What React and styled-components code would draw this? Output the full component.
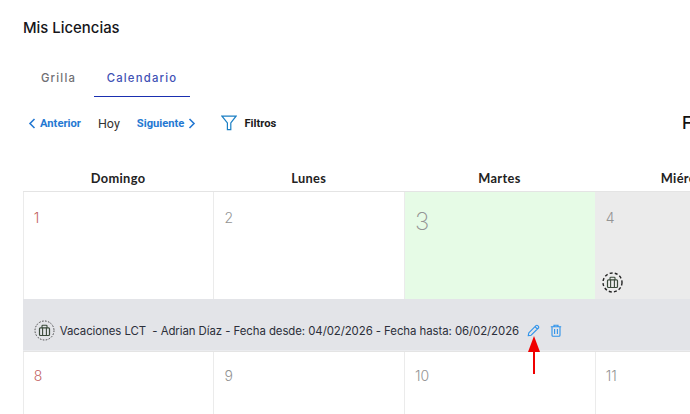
import React from "react";
import styled, { createGlobalStyle } from "styled-components";

const Global = createGlobalStyle`
  html, body { margin: 0; padding: 0; background: #fff; }
  body { font-family: "Inter", "Liberation Sans", sans-serif; }
`;

const Page = styled.div`
  position: relative;
  width: 690px;
  height: 414px;
  overflow: hidden;
  padding-left: 23px;
  box-sizing: border-box;
`;

const Title = styled.h1`
  margin: 0;
  padding-top: 19px;
  font-size: 14.9px;
  line-height: 18px;
  font-weight: 500;
  color: #16161a;
`;

const Tabs = styled.div`
  display: flex;
  margin-top: 24px;
  height: 35px;
`;

const Tab = styled.div`
  box-sizing: border-box;
  width: ${(p) => p.$w}px;
  height: 36px;
  padding-top: 10px;
  text-align: center;
  font-size: 11.3px;
  line-height: 14px;
  font-weight: 500;
  letter-spacing: 1.2px;
  color: ${(p) => (p.$active ? "#3f51b5" : "#6f6f73")};
  border-bottom: ${(p) => (p.$active ? "1px solid #1a2fb0" : "none")};
`;

const Toolbar = styled.div`
  display: flex;
  align-items: center;
  height: 22px;
  margin-top: 16px;
  width: 667px;
  font-family: "Roboto", sans-serif;
  font-size: 11.2px;
  font-weight: 700;
`;

const NavLink = styled.span`
  display: flex;
  align-items: center;
  gap: 4px;
  color: #2478d2;
  margin-left: ${(p) => p.$ml || 0}px;
`;

const Today = styled.span`
  margin-left: 17px;
  font-weight: 400;
  font-size: 12.5px;
  color: #333;
`;

const FilterBtn = styled.span`
  display: flex;
  align-items: center;
  gap: 7px;
  margin-left: 25px;
  color: #1b1b1b;
`;

const Month = styled.span`
  margin-left: auto;
  width: 8px;
  font-family: "Inter", sans-serif;
  font-size: 17px;
  font-weight: 500;
  color: #111;
  white-space: nowrap;
`;

const Calendar = styled.div`
  margin-top: 37px;
  margin-left: -0.3px;
  width: 1335px;
`;

const DayHead = styled.div`
  display: grid;
  grid-template-columns: repeat(7, 190.7px);
  height: 20px;
`;

const DayName = styled.div`
  text-align: center;
  font-family: "Lato", sans-serif;
  font-size: 12.8px;
  line-height: 15px;
  font-weight: 700;
  letter-spacing: 0.35px;
  color: #222;
`;

const Week = styled.div`
  display: grid;
  grid-template-columns: repeat(7, 190.7px);
  height: ${(p) => p.$h}px;
  border-top: 1.5px solid #e4e4e4;
  box-sizing: border-box;
`;

const Cell = styled.div`
  position: relative;
  box-sizing: border-box;
  border-left: 1.5px solid #ebebeb;
  background: ${(p) => p.$bg || "#fff"};
  padding: ${(p) => p.$pt}px 0 0 10px;
  font-weight: ${(p) => (p.$today ? 200 : 300)};
  font-size: ${(p) => (p.$today ? 24 : 14)}px;
  line-height: ${(p) => (p.$today ? 28 : 20)}px;
  color: ${(p) => p.$color || "#949494"};
`;

const CellBadge = styled.span`
  position: absolute;
  left: 6px;
  bottom: 6px;
  display: flex;
`;

const Detail = styled.div`
  display: flex;
  align-items: center;
  height: 52px;
  width: 668px;
  box-sizing: border-box;
  padding: 12px 0 0 11px;
  background: #e3e4e8;
  border-bottom: 1px solid #ebecef;
  font-size: 11.4px;
  white-space: pre;
`;

const DetailText = styled.span`
  margin-left: 5px;
  letter-spacing: -0.06px;
  color: #2c2f3a;
`;

const DetailActions = styled.span`
  display: flex;
  align-items: center;
  gap: 10px;
  margin-left: 8px;
`;

const Arrow = styled.svg`
  position: absolute;
  left: 528px;
  top: 335px;
`;

const Briefcase = ({ size = 21, sw = 1.4, dash = "3 2.2", color = "#222" }) => (
  <svg width={size} height={size} viewBox="0 0 21 21" fill="none">
    <circle cx="10.5" cy="10.5" r="9.5" stroke={color} strokeWidth={sw} strokeDasharray={dash} />
    <rect x="5.5" y="7.8" width="10" height="7.7" rx="1" stroke="#3a4a3a" strokeWidth="1.2" />
    <path d="M8 7.8V6a.8.8 0 0 1 .8-.8h3.4a.8.8 0 0 1 .8.8v1.8M8.6 7.8v7.7M12.4 7.8v7.7" stroke="#3a4a3a" strokeWidth="1.1" />
  </svg>
);

const Chevron = ({ dir }) => (
  <svg width="8" height="11" viewBox="0 0 8 11" fill="none">
    <path d={dir === "l" ? "M6.5 1L2 5.5l4.5 4.5" : "M1.5 1L6 5.5 1.5 10"} stroke="#2478d2" strokeWidth="1.6" />
  </svg>
);

const Funnel = () => (
  <svg width="16" height="16" viewBox="0 0 16 16" fill="none">
    <path d="M1 1.2h14L9.8 8v6.6H6.4V8L1 1.2z" stroke="#1b7fc4" strokeWidth="1.2" />
  </svg>
);

const Pencil = () => (
  <svg width="13" height="13" viewBox="0 0 13 13" fill="none">
    <path d="M1.2 11.8l.6-3L9 1.6a1.2 1.2 0 0 1 1.7 0l.7.7a1.2 1.2 0 0 1 0 1.7L4.2 11.2l-3 .6zM8 2.7l2.3 2.3" stroke="#2f93ea" strokeWidth="1.1" strokeLinejoin="round" />
  </svg>
);

const Trash = () => (
  <svg width="12" height="13" viewBox="0 0 12 13" fill="none">
    <path d="M.8 2.8h10.4M4 2.6V1.2h4v1.4M2 2.8v8.4a1 1 0 0 0 1 1h6a1 1 0 0 0 1-1V2.8M4.6 5v5M7.4 5v5" stroke="#2f93ea" strokeWidth="1.1" />
  </svg>
);

const days = ["Domingo", "Lunes", "Martes", "Miércoles", "Jueves", "Viernes", "Sábado"];
const red = "#c25f5f";

export default function App() {
  return (
    <>
      <Global />
      <Page>
        <Title>Mis Licencias</Title>
        <Tabs>
          <Tab $w={71}>Grilla</Tab>
          <Tab $w={96} $active>Calendario</Tab>
        </Tabs>
        <Toolbar>
          <NavLink $ml={5}><Chevron dir="l" />Anterior</NavLink>
          <Today>Hoy</Today>
          <NavLink $ml={17}>Siguiente<Chevron dir="r" /></NavLink>
          <FilterBtn><Funnel />Filtros</FilterBtn>
          <Month>Febrero 2026</Month>
        </Toolbar>
        <Calendar>
          <DayHead>
            {days.map((d) => <DayName key={d}>{d}</DayName>)}
          </DayHead>
          <Week $h={108}>
            <Cell $pt={16} $color={red}>1</Cell>
            <Cell $pt={16}>2</Cell>
            <Cell $pt={16} $today $bg="#e6fbe6">3</Cell>
            <Cell $pt={16} $bg="#ebebeb">
              4
              <CellBadge><Briefcase /></CellBadge>
            </Cell>
            <Cell $pt={16} $bg="#ebebeb">5</Cell>
            <Cell $pt={16} $bg="#ebebeb">6</Cell>
            <Cell $pt={16} $color={red}>7</Cell>
          </Week>
          <Detail>
            <Briefcase sw={0.8} dash="1.6 1.4" />
            <DetailText>Vacaciones LCT  - Adrian Díaz - Fecha desde: 04/02/2026 - Fecha hasta: 06/02/2026</DetailText>
            <DetailActions><Pencil /><Trash /></DetailActions>
          </Detail>
          <Week $h={80}>
            <Cell $pt={14} $color={red}>8</Cell>
            <Cell $pt={14}>9</Cell>
            <Cell $pt={14}>10</Cell>
            <Cell $pt={14}>11</Cell>
            <Cell $pt={14}>12</Cell>
            <Cell $pt={14}>13</Cell>
            <Cell $pt={14} $color={red}>14</Cell>
          </Week>
        </Calendar>
        <Arrow width="12" height="40" viewBox="0 0 12 40">
          <path d="M6 1L12 17H7V39H5V17H0z" fill="#f00000" />
        </Arrow>
      </Page>
    </>
  );
}
